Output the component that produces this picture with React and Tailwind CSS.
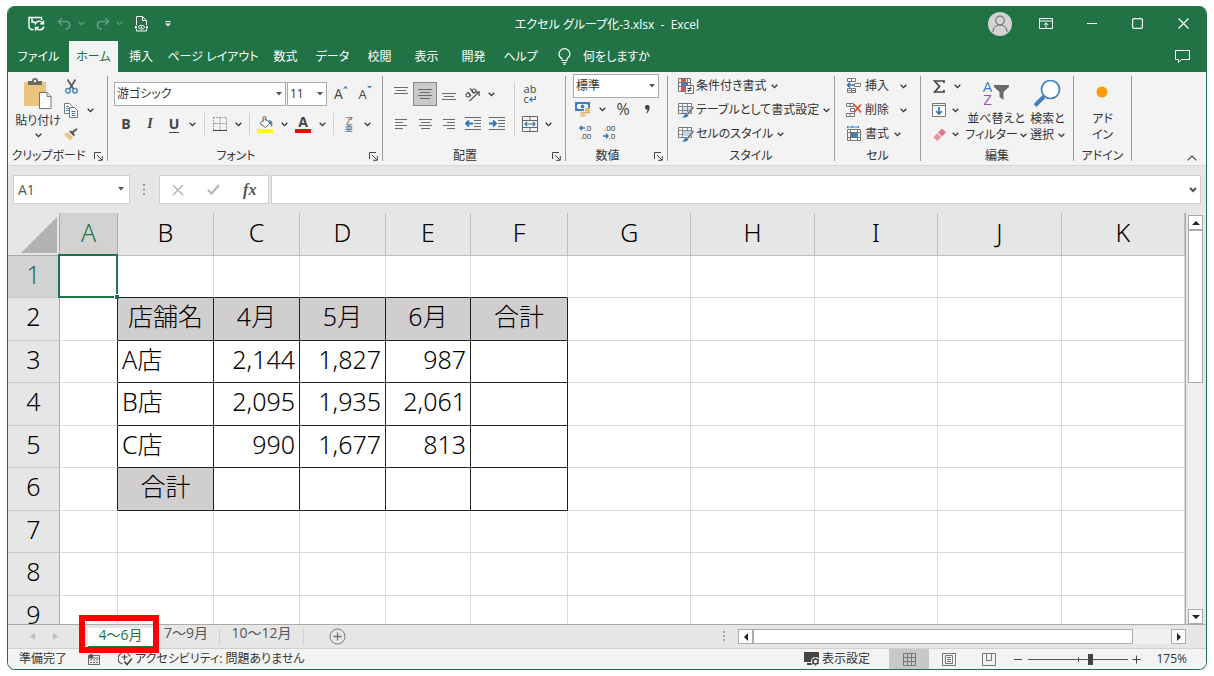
import React, { useState } from 'react'

const MENU_TABS = ['数式', 'データ', '校閲', '表示', '開発', 'ヘルプ']

const COLUMNS = [
  { id: 'A', width: 'w-[58px]' },
  { id: 'B', width: 'w-[96px]' },
  { id: 'C', width: 'w-[86px]' },
  { id: 'D', width: 'w-[86px]' },
  { id: 'E', width: 'w-[85px]' },
  { id: 'F', width: 'w-[97px]' },
  { id: 'G' },
  { id: 'H' },
  { id: 'I' },
  { id: 'J' },
  { id: 'K' },
]

// Keyed by row number, starting in column B
const DATA = {
  2: ['店舗名', '4月', '5月', '6月', '合計'],
  3: ['A店', '2,144', '1,827', '987', ''],
  4: ['B店', '2,095', '1,935', '2,061', ''],
  5: ['C店', '990', '1,677', '813', ''],
  6: ['合計', '', '', '', ''],
}

/* ---------- small shared pieces ---------- */

function Chevron({ className = 'w-3' }) {
  return (
    <button type="button" aria-label="その他" className={`flex h-5 shrink-0 items-center justify-center ${className}`}>
      <ChevronMark />
    </button>
  )
}

function ChevronMark({ color = '#333' }) {
  return (
    <svg width="7" height="5" viewBox="0 0 7 5" className="shrink-0" fill="none" stroke={color} strokeWidth="1.3">
      <path d="M0.7 0.8 3.5 3.6 6.3 0.8" />
    </svg>
  )
}

function Triangle({ className = '' }) {
  return (
    <svg width="6" height="4" viewBox="0 0 6 4" className={className}>
      <path d="M0 0h6L3 3.6z" fill="#555" />
    </svg>
  )
}

function IconButton({ label, className = 'w-6', children }) {
  return (
    <button type="button" aria-label={label} className={`flex h-6 shrink-0 items-center justify-center ${className}`}>
      {children}
    </button>
  )
}

function Picker({ label, value, className }) {
  return (
    <div className={`relative h-6 shrink-0 ${className}`}>
      <select
        aria-label={label}
        defaultValue={value}
        className="h-full w-full appearance-none border border-[#ababab] bg-white pl-0.5 text-xs text-[#333] [font-feature-settings:'palt']"
      >
        <option>{value}</option>
      </select>
      <Triangle className="pointer-events-none absolute top-2.5 right-1" />
    </div>
  )
}

function Divider({ className }) {
  return <div className={`w-px shrink-0 bg-[#d0d0d0] ${className}`} />
}

function Group({ title, launcher, className, children }) {
  return (
    <>
      <section className={`flex shrink-0 flex-col ${className}`}>
        <div className="h-[75px]">{children}</div>
        <div className={`relative flex h-[18px] items-center justify-center ${launcher ? 'pr-[18px]' : ''}`}>
          <h2>{title}</h2>
          {launcher && (
            <button type="button" aria-label={`${title}の設定`} className="absolute right-1 bottom-1">
              <svg width="9" height="9" viewBox="0 0 9 9" fill="none" stroke="#444">
                <path d="M0.500 7V0.500H7M3 3l5 5M8.300 4v4.300H4" />
              </svg>
            </button>
          )}
        </div>
      </section>
      <div className="mt-1 h-[85px] w-px shrink-0 bg-[#9b9b9b]" />
    </>
  )
}

function Lines({ rows, top = 0 }) {
  // rows: list of [x, width] pairs, one line each
  return (
    <svg width="14" height="16" viewBox="0 0 14 16" fill="#6b6b6b">
      {rows.map(([x, w], i) => (
        <rect key={i} x={x} y={top + i * 3} width={w} height="1" />
      ))}
    </svg>
  )
}

/* ---------- title bar and menu ---------- */

function TitleBar() {
  return (
    <header className="relative flex h-[35px] shrink-0 items-center justify-between text-white">
      <div className="flex items-center pl-5">
        <button type="button" aria-label="上書き保存">
          <svg width="17" height="16" viewBox="0 0 17 16" fill="none" stroke="#fff" strokeWidth="1.400">
            <path d="M5.500 13.500H3L1 11.500V1.500h12.500V4M4 1.500V6h3" />
            <path d="M7 8.500a4.300 4.300 0 0 1 8-1M15.500 4.500V7.800h-3.300M15.800 10.500a4.300 4.300 0 0 1-8 1M7.500 14.800v-3.300h3.300" />
          </svg>
        </button>
        <button type="button" aria-label="元に戻す" className="ml-3 flex items-center gap-1.5">
          <svg width="15" height="13" viewBox="0 0 15 13" fill="none" stroke="#5f9c7b" strokeWidth="1.700">
            <path d="M5 1 1.500 4.500 5 8M1.500 4.500H9.500a3.800 3.800 0 0 1 0 7.500H8" />
          </svg>
          <ChevronMark color="#5f9c7b" />
        </button>
        <button type="button" aria-label="やり直し" className="ml-2.5 flex items-center gap-1.5">
          <svg width="15" height="13" viewBox="0 0 15 13" fill="none" stroke="#5f9c7b" strokeWidth="1.700">
            <path d="M10 1l3.500 3.500L10 8M13.500 4.500H5.500a3.800 3.800 0 0 0 0 7.500H7" />
          </svg>
          <ChevronMark color="#5f9c7b" />
        </button>
        <button type="button" aria-label="印刷プレビュー" className="ml-3">
          <svg width="13" height="16" viewBox="0 0 13 16" fill="none" stroke="#fff">
            <path d="M1.500 9V0.500h6L11.500 4.500V9M7.500 0.500v4h4M1.500 13v2h10v-2" />
            <path d="M0 10h2v2.500H0zM11 10h2v2.500h-2z" fill="#fff" stroke="none" />
            <ellipse cx="6.500" cy="11.200" rx="3" ry="1.900" />
            <circle cx="6.500" cy="11.200" r="0.500" />
          </svg>
        </button>
        <button type="button" aria-label="クイック アクセス ツール バーのカスタマイズ" className="ml-[17px]">
          <svg width="6" height="6" viewBox="0 0 6 6" fill="#fff">
            <path d="M0.500 0h5v1h-5zM0 2.500h6L3 5.500z" />
          </svg>
        </button>
      </div>

      <h1 className="pointer-events-none absolute inset-x-0 pt-0.5 text-center text-xs whitespace-pre [font-feature-settings:'palt']">
        エクセル グループ化-3.xlsx  -  Excel
      </h1>

      <div className="flex items-center pr-[17px]">
        <button type="button" aria-label="アカウント" className="h-6 w-6 overflow-hidden rounded-full bg-[#d4d4d4]">
          <svg width="24" height="24" viewBox="0 0 24 24" fill="none" stroke="#777" strokeWidth="1.200">
            <circle cx="12" cy="8.500" r="4.300" />
            <path d="M5 20c0-4.300 3-7 7-7s7 2.700 7 7" />
          </svg>
        </button>
        <button type="button" aria-label="リボンの表示オプション" className="ml-[27px]">
          <svg width="14" height="11" viewBox="0 0 14 11" fill="none" stroke="#fff">
            <path d="M0.500 0.500h13v10H0.500zM0.500 3h13M7 10V5M4.800 7 7 4.800 9.200 7" />
          </svg>
        </button>
        <button type="button" aria-label="最小化" className="ml-[34px]">
          <svg width="10" height="10" viewBox="0 0 10 10" stroke="#fff">
            <path d="M0 4.500h10" />
          </svg>
        </button>
        <button type="button" aria-label="最大化" className="ml-[35px]">
          <svg width="11" height="11" viewBox="0 0 11 11" fill="none" stroke="#fff" strokeWidth="1.200">
            <rect x="0.600" y="0.600" width="9.800" height="9.800" rx="1.500" />
          </svg>
        </button>
        <button type="button" aria-label="閉じる" className="ml-[35px]">
          <svg width="11" height="11" viewBox="0 0 11 11" stroke="#fff" strokeWidth="1.200">
            <path d="M0.500 0.500l10 10M10.500 0.500l-10 10" />
          </svg>
        </button>
      </div>
    </header>
  )
}

function MenuBar() {
  return (
    <nav className="flex h-[31px] shrink-0 items-stretch text-xs whitespace-nowrap text-white [font-feature-settings:'palt']">
      <button type="button" className="w-[61px]">ファイル</button>
      <button type="button" className="w-[49px] bg-[#f3f3f3] text-[#217346]">ホーム</button>
      <button type="button" className="w-[46px]">挿入</button>
      <button type="button" className="w-[98px]">ページ レイアウト</button>
      {MENU_TABS.map((tab) => (
        <button type="button" key={tab} className="w-[47px]">{tab}</button>
      ))}
      <button type="button" className="ml-[14px] flex items-center gap-3">
        <svg width="13" height="17" viewBox="0 0 13 17" fill="none" stroke="#fff" strokeWidth="1.200">
          <path d="M4 12.500v-1.700C2.200 9.700 1 8.200 1 6.200a5.400 5.400 0 0 1 11 0c0 2-1.300 3.500-3 4.600v1.700zM4.500 14.500h4M5.200 16.200h2.600" />
        </svg>
        何をしますか
      </button>
      <button type="button" aria-label="コメント" className="mr-4 ml-auto">
        <svg width="15" height="13" viewBox="0 0 15 13" fill="none" stroke="#fff">
          <path d="M0.500 0.500h14v9H6.500l-3 3v-3h-3z" />
        </svg>
      </button>
    </nav>
  )
}

/* ---------- ribbon groups ---------- */

function ClipboardGroup() {
  return (
    <Group title="クリップボード" launcher className="w-[99px]">
      <div className="flex">
        <button type="button" className="flex w-[52px] flex-col items-center pt-1.5 pl-2">
          <svg width="28" height="31" viewBox="0 0 28 31">
            <path d="M0 4h22v24H0z" fill="#eac47d" />
            <path d="M4 7V3h4a3 3 0 0 1 6 0h4v4z" fill="#6a6a6a" />
            <circle cx="11" cy="3" r="1.200" fill="#f3f3f3" />
            <path d="M15.500 14.500h7.500l4 4v12H15.500z" fill="#fff" stroke="#777" />
            <path d="M23 14.500v4h4" fill="none" stroke="#777" />
          </svg>
          <span className="leading-6">貼り付け</span>
          <ChevronMark />
        </button>
        <div className="flex flex-col pt-0.5">
          <IconButton label="切り取り" className="w-[22px]">
            <svg width="13" height="15" viewBox="0 0 13 15" fill="none" strokeWidth="1.300">
              <path d="M2.500 0.500 8.500 10M10.500 0.500 4.500 10" stroke="#555" strokeWidth="1.600" />
              <circle cx="3" cy="11.700" r="2.300" stroke="#3f7fc0" />
              <circle cx="10" cy="11.700" r="2.300" stroke="#3f7fc0" />
            </svg>
          </IconButton>
          <div className="flex items-center">
            <IconButton label="コピー" className="w-[22px]">
              <svg width="15" height="15" viewBox="0 0 15 15" fill="#fff" stroke="#777">
                <path d="M0.500 0.500h5l3 3v7h-8z" />
                <path d="M5.500 4.500h5l3 3v7h-8z" />
                <path d="M2 3.500h3M2 5.500h3M2 7.500h3M7.500 8.500h4M7.500 10.500h4M7.500 12.500h4" stroke="#3f7fc0" />
              </svg>
            </IconButton>
            <Chevron className="w-4" />
          </div>
          <IconButton label="書式のコピー/貼り付け" className="w-[22px]">
            <svg width="14" height="13" viewBox="0 0 14 13">
              <path d="M0 6l4-1.500 5 5-3 3z" fill="#eac47d" />
              <path d="M5 3.500 10 8.500 11 6.500 9.500 5 13.500 1.500 12.500 0 8 3.500 6.500 2.500z" fill="#555" />
            </svg>
          </IconButton>
        </div>
      </div>
    </Group>
  )
}

function FontGroup() {
  return (
    <Group title="フォント" launcher className="w-[274px]">
      <div className="flex flex-col gap-1.5 pt-2.5 pl-1.5">
        <div className="flex items-center">
          <Picker label="フォント" value="游ゴシック" className="w-[172px]" />
          <Picker label="フォント サイズ" value="11" className="ml-px w-10" />
          <IconButton label="フォント サイズの拡大" className="ml-0.5 w-6">
            <span className="text-sm leading-4 text-[#444]">A</span>
            <svg width="5" height="16" viewBox="0 0 5 16"><path d="M0 2.500 2.500 0 5 2.500z" fill="#3f7fc0" /></svg>
          </IconButton>
          <IconButton label="フォント サイズの縮小">
            <span className="text-[13px] leading-4 text-[#444]">A</span>
            <svg width="5" height="16" viewBox="0 0 5 16"><path d="M0 0h5L2.500 2.500z" fill="#3f7fc0" /></svg>
          </IconButton>
        </div>
        <div className="flex items-center text-sm text-[#444]">
          <IconButton label="太字"><b>B</b></IconButton>
          <IconButton label="斜体"><i className="font-['Liberation_Serif'] font-bold">I</i></IconButton>
          <IconButton label="下線"><b className="border-b border-[#444] leading-4">U</b></IconButton>
          <Chevron />
          <Divider className="mx-1.5 h-[22px]" />
          <IconButton label="罫線" className="w-[18px]">
            <svg width="14" height="14" viewBox="0 0 14 14" fill="none" stroke="#888">
              <path d="M0.500 0.500h13v13M0.500 0.500v13M7 1v12M1 6.500h12" strokeDasharray="1.500 1.200" />
              <path d="M0 13.500h14" stroke="#444" />
            </svg>
          </IconButton>
          <Chevron className="w-[18px]" />
          <Divider className="mx-0.5 h-[22px]" />
          <IconButton label="塗りつぶしの色" className="w-[26px]">
            <svg width="16" height="17" viewBox="0 0 16 17" fill="none">
              <path d="M3 7.500 8 2.500l5 4.500-4.500 4.500z" fill="#fff" stroke="#666" />
              <path d="M6 6V2a1.500 1.500 0 0 1 3 0V5" stroke="#666" />
              <path d="M11.500 4c4 0 4.500 3.500 3.500 7-1.500-1-1-3-2-4z" fill="#3f7fc0" />
              <path d="M0 13h16v4H0z" fill="#ffff00" />
            </svg>
          </IconButton>
          <Chevron />
          <IconButton label="フォントの色" className="w-[26px]">
            <span className="flex w-4 justify-center border-b-4 border-[#ff0000] text-sm leading-[14px] font-bold">A</span>
          </IconButton>
          <Chevron />
          <Divider className="mx-[5px] h-[22px]" />
          <IconButton label="ふりがなの表示" className="w-5">
            <span className="flex flex-col items-center text-[8px] leading-2">
              <span>ア</span>
              <span>亜</span>
            </span>
          </IconButton>
          <Chevron className="w-4" />
        </div>
      </div>
    </Group>
  )
}

function IndentIcon({ outdent }) {
  return (
    <svg width="16" height="14" viewBox="0 0 16 14" fill="none" stroke="#6b6b6b">
      <path d="M0 0.500h16M9 3.500h7M9 6.500h7M9 9.500h7M0 12.500h16" />
      <path d={outdent ? 'M8 6.500H1M4 3.500 1 6.500l3 3' : 'M0 6.500h7M4 3.500l3 3-3 3'} stroke="#2f74b8" strokeWidth="1.800" />
    </svg>
  )
}

function AlignmentGroup() {
  return (
    <Group title="配置" launcher className="w-[182px]">
      <div className="flex pt-2.5 pl-1.5">
        <div className="flex flex-col gap-1.5">
          <div className="flex items-center">
            <IconButton label="上揃え"><Lines top={1} rows={[[0, 14], [2, 10], [0, 14]]} /></IconButton>
            <button type="button" aria-label="上下中央揃え" aria-pressed="true" className="flex h-6 w-6 items-center justify-center border border-[#8a8a8a] bg-[#c9c9c9]">
              <Lines top={3} rows={[[0, 14], [2, 10], [0, 14], [2, 10]]} />
            </button>
            <IconButton label="下揃え"><Lines top={7} rows={[[0, 14], [2, 10], [0, 14]]} /></IconButton>
            <IconButton label="方向">
              <svg width="16" height="15" viewBox="0 0 16 15" fill="none" stroke="#555" strokeWidth="1.200">
                <path d="M4.500 14 14 5M14.200 9V4.800H10" />
                <ellipse cx="3" cy="8" rx="2" ry="2" />
                <path d="M2.500 5 6 9M5 1.500l4.500 5" />
                <ellipse cx="9" cy="4" rx="2" ry="2" />
              </svg>
            </IconButton>
            <Chevron />
          </div>
          <div className="flex items-center">
            <IconButton label="左揃え"><Lines top={3} rows={[[1, 12], [1, 8], [1, 12], [1, 8]]} /></IconButton>
            <IconButton label="中央揃え"><Lines top={3} rows={[[1, 13], [3, 9], [1, 13], [3, 9]]} /></IconButton>
            <IconButton label="右揃え"><Lines top={3} rows={[[1, 12], [5, 8], [1, 12], [5, 8]]} /></IconButton>
            <IconButton label="インデントを減らす"><IndentIcon outdent /></IconButton>
            <IconButton label="インデントを増やす"><IndentIcon /></IconButton>
          </div>
        </div>
        <Divider className="mx-[5px] h-[54px]" />
        <div className="flex flex-col gap-1.5">
          <IconButton label="折り返して全体を表示する" className="w-5">
            <span className="flex flex-col text-[11px] leading-[10px] text-[#444]">
              <span>ab</span>
              <span className="flex items-center">
                c
                <svg width="7" height="6" viewBox="0 0 7 6" fill="none" stroke="#2f74b8" strokeWidth="1.200">
                  <path d="M6.300 0v3.500H1M3.200 1.200 1 3.500l2.200 2.200" />
                </svg>
              </span>
            </span>
          </IconButton>
          <div className="flex items-center">
            <IconButton label="セルを結合して中央揃え" className="w-5">
              <svg width="16" height="16" viewBox="0 0 16 16" fill="none" stroke="#666">
                <path d="M0.500 0.500h15v15H0.500zM0.500 4.500h15M0.500 11.500h15M8 0.500v4M8 11.500v4" />
                <path d="M3 8h10M5 6 3 8l2 2M11 6l2 2-2 2" stroke="#2f74b8" strokeWidth="1.200" />
              </svg>
            </IconButton>
            <Chevron className="w-4" />
          </div>
        </div>
      </div>
    </Group>
  )
}

function DecimalIcon({ top, bottom, increase }) {
  const arrow = (
    <svg width="6" height="6" viewBox="0 0 6 6" fill="none" stroke="#2f74b8" strokeWidth="1.400">
      <path d={increase ? 'M6 3H1M3 0.800 0.900 3 3 5.200' : 'M0 3h5M3 0.800 5.100 3 3 5.200'} />
    </svg>
  )
  return (
    <span className="flex flex-col items-end text-[8px] leading-2 text-[#333]">
      <span className="flex items-center">{increase && arrow}{top}</span>
      <span className="flex items-center">{!increase && arrow}{bottom}</span>
    </span>
  )
}

function NumberGroup() {
  return (
    <Group title="数値" launcher className="w-[101px]">
      <div className="flex flex-col pt-0.5 pl-[7px]">
        <Picker label="表示形式" value="標準" className="w-[86px]" />
        <div className="flex h-[22px] items-center text-[#444]">
          <IconButton label="通貨表示形式" className="w-5">
            <svg width="16" height="15" viewBox="0 0 16 15">
              <path d="M0 0h15v9H0z" fill="#3f7fc0" />
              <path d="M2 3l1.500-1h8L13 3v3l-1.500 1h-8L2 6z" fill="#fff" />
              <circle cx="7.500" cy="4.500" r="1.900" fill="#3f7fc0" />
              <path d="M9 6h7v8H5v-4h4z" fill="#f3f3f3" />
              <path d="M10 6.500h5M10 8.500h5M5.500 11h5M10 10.500h5M5.500 13.500h5" stroke="#e0a95a" strokeWidth="1.300" />
            </svg>
          </IconButton>
          <Chevron className="w-[18px]" />
          <IconButton label="パーセント スタイル"><span className="text-base">%</span></IconButton>
          <IconButton label="桁区切りスタイル">
            <svg width="5" height="9" viewBox="0 0 5 9" fill="#444"><path d="M0 2.200a2.200 2.200 0 0 1 4.600 0C4.600 5 3.500 7.500.8 8.800 2 7.300 2.400 6 2.300 4.600 1 4.600 0 3.600 0 2.200z" /></svg>
          </IconButton>
        </div>
        <div className="flex h-6 items-center">
          <IconButton label="小数点以下の表示桁数を増やす"><DecimalIcon increase top=".0" bottom=".00" /></IconButton>
          <IconButton label="小数点以下の表示桁数を減らす"><DecimalIcon top=".00" bottom=".0" /></IconButton>
        </div>
      </div>
    </Group>
  )
}

function GridBase({ children }) {
  return (
    <svg width="16" height="16" viewBox="0 0 16 16" fill="none">
      <path d="M0.500 1.500h13v10H0.500z" fill="#fff" stroke="#777" />
      {children}
    </svg>
  )
}

function StylesGroup() {
  const brush = (
    <>
      <path d="M15.500 3.500 9 11l1.500 1.500L16 6z" fill="#666" stroke="#f3f3f3" strokeWidth="0.600" />
      <path d="M4 15.500c2 0 2-4 4.500-4.500l2 2c-.5 2.500-3.500 3-6.500 2.500z" fill="#3f7fc0" />
    </>
  )
  const items = [
    {
      text: '条件付き書式',
      icon: (
        <svg width="16" height="16" viewBox="0 0 16 16" fill="none" stroke="#777">
          <path d="M0.500 0.500h12v13H0.500zM0.500 4.500h12M0.500 8.500h12M3.500 0.500v13M9.500 0.500v7" />
          <path d="M4 1h4v3H4zM4 9h3v4H4z" fill="#d9533c" stroke="none" />
          <path d="M4 5h6v3H4z" fill="#3f7fc0" stroke="none" />
          <path d="M7.500 7.500h8v8h-8z" fill="#fff" />
          <path d="M9.500 10.500h4M9.500 12.500h4M13 9l-3 5" stroke="#444" />
        </svg>
      ),
    },
    {
      text: 'テーブルとして書式設定',
      icon: <GridBase><path d="M1 4.500h12M1 8.500h12M4.500 2v9M9.500 2v9" stroke="#888" /><path d="M5 5h8v6H5z" fill="#3f7fc0" opacity=".25" />{brush}</GridBase>,
    },
    {
      text: 'セルのスタイル',
      icon: <GridBase><path d="M1 4.500h12M1 8.500h3M4.500 2v9M9.500 2v2" stroke="#888" /><path d="M5 5h8v5H5z" fill="#bcd3ec" />{brush}</GridBase>,
    },
  ]
  return (
    <Group title="スタイル" className="w-[166px]">
      <div className="flex flex-col items-start pt-0.5 pl-2.5">
        {items.map((item) => (
          <button type="button" key={item.text} className="flex h-6 items-center">
            {item.icon}
            <span className="ml-0.5">{item.text}</span>
            <span className="ml-1"><ChevronMark /></span>
          </button>
        ))}
      </div>
    </Group>
  )
}

function CellsGroup() {
  return (
    <Group title="セル" className="w-[85px]">
      <div className="flex flex-col items-start pt-0.5 pl-[11px]">
        <button type="button" className="flex h-6 items-center">
          <svg width="16" height="16" viewBox="0 0 16 16" fill="#fff" stroke="#777">
            <path d="M1.500 0.500h8v3h-8zM5.500 0.500v3M8.500 5.500h6v3h-6zM1.500 10.500h8v4h-8zM5.500 10.500v4M1.500 12.500h8" />
            <path d="M8 7H1.500M4 4.500 1.500 7 4 9.500" fill="none" stroke="#2f74b8" strokeWidth="1.500" />
          </svg>
          <span className="ml-[3px]">挿入</span>
          <span className="ml-[11px]"><ChevronMark /></span>
        </button>
        <button type="button" className="flex h-6 items-center">
          <svg width="16" height="16" viewBox="0 0 16 16" fill="#fff" stroke="#777">
            <path d="M0.500 1.500h7v3h-7zM4 1.500v3M4.500 6.500h4v3h-4zM0.500 11.500h8v3h-8zM4 11.500v3" />
            <path d="M8 2.500l7 8M15 2.500l-7 8" stroke="#d9533c" strokeWidth="1.800" />
          </svg>
          <span className="ml-[3px]">削除</span>
          <span className="ml-[11px]"><ChevronMark /></span>
        </button>
        <button type="button" className="flex h-6 items-center">
          <svg width="16" height="16" viewBox="0 0 16 16" fill="#fff" stroke="#777">
            <path d="M1.500 3.500h13v11h-13zM1.500 6.500h13M1.500 11.500h13M4.500 3.500v11M11.500 3.500v11" />
            <path d="M5 7h6v4H5z" fill="#3f7fc0" stroke="none" />
            <path d="M1 1h12M1.500 0v2M6.500 0v2M12.500 0v2" stroke="#3f7fc0" />
          </svg>
          <span className="ml-[3px]">書式</span>
          <span className="ml-[5px]"><ChevronMark /></span>
        </button>
      </div>
    </Group>
  )
}

function EditingGroup() {
  return (
    <Group title="編集" className="w-[152px]">
      <div className="flex">
        <div className="flex w-[45px] flex-col pt-0.5 pl-1.5">
          <div className="flex items-center">
            <IconButton label="オート SUM">
              <svg width="12" height="13" viewBox="0 0 12 13" fill="none" stroke="#444" strokeWidth="1.700">
                <path d="M11 3V1H1.500L6.500 6.500 1.500 12H11v-2" />
              </svg>
            </IconButton>
            <Chevron />
          </div>
          <div className="flex items-center">
            <IconButton label="フィル">
              <svg width="14" height="14" viewBox="0 0 14 14" fill="#fff" stroke="#777">
                <path d="M0.500 0.500h13v13H0.500zM0.500 2.500h13" />
                <path d="M7 4v7M4 8l3 3 3-3" fill="none" stroke="#2f74b8" strokeWidth="1.700" />
              </svg>
            </IconButton>
            <Chevron className="w-2" />
          </div>
          <div className="flex items-center">
            <IconButton label="クリア">
              <svg width="13" height="13" viewBox="0 0 13 13">
                <path d="M5 4.500 9 0.500l4 4-4 4z" fill="#e0788a" />
                <path d="M4.300 5.200 8.300 9.200 5 12.500H3.500L0.500 9.500V9z" fill="#e893a2" />
              </svg>
            </IconButton>
            <Chevron className="w-2" />
          </div>
        </div>
        <button type="button" className="flex w-[60px] flex-col items-center pt-2">
          <span className="flex h-[31px] items-start gap-0.5">
            <span className="flex flex-col text-[15px] leading-[13px]">
              <span className="text-[#3f7fc0]">A</span>
              <span className="text-[#9a55b8]">Z</span>
            </span>
            <svg width="15" height="22" viewBox="0 0 15 22" fill="#6a6a6a">
              <path d="M0 5h15v2L9.500 12v8l-4-3v-5L0 7z" />
            </svg>
          </span>
          <span className="leading-4">並べ替えと</span>
          <span className="flex items-center gap-0.5 leading-4">フィルター <ChevronMark /></span>
        </button>
        <button type="button" className="flex w-[43px] flex-col items-center pt-2">
          <svg width="28" height="31" viewBox="0 0 28 31" fill="none" stroke="#3f7fc0">
            <circle cx="16.500" cy="9.500" r="9" fill="#fff" strokeWidth="1.700" />
            <path d="M10 16.500 1 25.500" strokeWidth="4" />
          </svg>
          <span className="leading-4">検索と</span>
          <span className="flex items-center gap-1 leading-4">選択 <ChevronMark /></span>
        </button>
      </div>
    </Group>
  )
}

function Ribbon() {
  return (
    <div className="flex h-[93px] shrink-0 overflow-hidden bg-[#f3f3f3] text-xs whitespace-nowrap text-[#333] [font-feature-settings:'palt']">
      <ClipboardGroup />
      <FontGroup />
      <AlignmentGroup />
      <NumberGroup />
      <StylesGroup />
      <CellsGroup />
      <EditingGroup />
      <Group title="アドイン" className="w-[57px]">
        <button type="button" className="flex w-full flex-col items-center pt-2">
          <svg width="28" height="31" viewBox="0 0 28 31">
            <circle cx="13" cy="12" r="5.500" fill="#ff9a0a" />
          </svg>
          <span className="leading-4">アド</span>
          <span className="leading-4">イン</span>
        </button>
      </Group>
      <button type="button" aria-label="リボンを折りたたむ" className="mr-[9px] mb-1 ml-auto self-end">
        <svg width="10" height="6" viewBox="0 0 10 6" fill="none" stroke="#444" strokeWidth="1.200">
          <path d="M0.700 5.300 5 1l4.300 4.300" />
        </svg>
      </button>
    </div>
  )
}

/* ---------- formula bar ---------- */

function FormulaBar() {
  return (
    <div className="flex h-12 shrink-0 items-start border-t border-[#d8d8d8] pt-[9px] pr-[5px] pl-[5px]">
      <div className="relative h-[29px] w-[117px]">
        <input aria-label="名前ボックス" defaultValue="A1" className="h-full w-full border border-[#cfcfcf] bg-white pl-1 text-sm text-[#555]" />
        <Triangle className="pointer-events-none absolute top-3 right-1.5" />
      </div>
      <div className="flex h-[29px] w-[29px] items-center justify-center">
        <svg width="3" height="12" viewBox="0 0 3 12" fill="#999">
          <path d="M0 0h2v2H0zM0 4.500h2v2H0zM0 9h2v2H0z" />
        </svg>
      </div>
      <div className="flex h-[29px] w-[110px] items-center justify-around border border-[#cfcfcf] bg-white">
        <button type="button" aria-label="キャンセル">
          <svg width="12" height="12" viewBox="0 0 12 12" stroke="#b5b5b5" strokeWidth="1.500"><path d="M1 1l10 10M11 1 1 11" /></svg>
        </button>
        <button type="button" aria-label="入力">
          <svg width="13" height="11" viewBox="0 0 13 11" fill="none" stroke="#b5b5b5" strokeWidth="2.200"><path d="M1 6l3.500 3.500L12 1" /></svg>
        </button>
        <button type="button" aria-label="関数の挿入" className="font-['Liberation_Serif'] text-base font-bold text-[#555] italic">fx</button>
      </div>
      <div className="relative ml-0.5 h-[29px] flex-1">
        <input aria-label="数式バー" className="h-full w-full border border-[#cfcfcf] bg-white px-2 text-sm" />
        <svg width="8" height="6" viewBox="0 0 8 6" className="absolute top-3 right-1" fill="none" stroke="#555" strokeWidth="2">
          <path d="M1 1l3 3 3-3" />
        </svg>
      </div>
    </div>
  )
}

/* ---------- sheet ---------- */

function cellClass(row, col) {
  const inTable = row >= 2 && row <= 6 && col >= 1 && col <= 5
  const right = inTable || (row >= 2 && row <= 6 && col === 0)
  const bottom = inTable || (row === 1 && col >= 1 && col <= 5)
  const centered = row === 2 || (row === 6 && col === 1)
  const align = centered ? 'text-center' : col === 1 ? 'pl-1 text-left' : 'pr-1 text-right'
  return [
    'border-r border-b pt-0 pb-1.5',
    right ? 'border-r-[#222]' : 'border-r-[#d9d9d9]',
    bottom ? 'border-b-[#222]' : 'border-b-[#d9d9d9]',
    inTable && centered ? 'bg-[#d0cece]' : 'bg-white',
    align,
  ].join(' ')
}

function Sheet() {
  return (
    <div className="min-h-0 min-w-0 flex-1 overflow-hidden">
      <table className="w-full table-fixed border-separate border-spacing-0 border-r border-[#ababab] text-[25px] leading-8 font-light text-black">
        <thead>
          <tr className="h-[43px]">
            <th className="w-[52px] border-r border-b border-[#ababab] p-0 align-bottom">
              <svg width="36" height="36" viewBox="0 0 36 36" className="mb-0.5 ml-[13px]">
                <path d="M36 0v36H0z" fill="#b2b2b2" />
              </svg>
            </th>
            {COLUMNS.map((c) => (
              <th
                key={c.id}
                scope="col"
                className={`border-r border-b pb-1 font-light ${c.width ?? ''} ${
                  c.id === 'A' ? 'border-r-[#ababab] border-b-[#217346] bg-[#d2d2d2] text-[#217346]' : 'border-[#bdbdbd]'
                }`}
              >
                {c.id}
              </th>
            ))}
          </tr>
        </thead>
        <tbody>
          {[1, 2, 3, 4, 5, 6, 7, 8, 9].map((row) => (
            <tr key={row} className="h-[42px] even:h-[43px]">
              <th
                scope="row"
                className={`border-r border-b border-r-[#ababab] border-b-[#c8c8c8] pb-1.5 font-light ${
                  row === 1 ? 'bg-[#d2d2d2] text-[#217346]' : ''
                }`}
              >
                {row}
              </th>
              {COLUMNS.map((c, col) => (
                <td key={c.id} className={`${cellClass(row, col)} ${row === 1 && col === 0 ? 'relative' : ''}`}>
                  {DATA[row]?.[col - 1]}
                  {row === 1 && col === 0 && (
                    <div className="absolute -inset-0.5 -right-px -bottom-px border-2 border-[#217346]">
                      <span className="absolute -right-[3px] -bottom-[3px] h-[5px] w-[5px] border-t border-l border-white bg-[#217346]" />
                    </div>
                  )}
                </td>
              ))}
            </tr>
          ))}
        </tbody>
      </table>
    </div>
  )
}

const ARROWS = {
  up: 'M0 6 4 2l4 4z',
  down: 'M0 2h8L4 6z',
  left: 'M6 0v8L2 4z',
  right: 'M2 0v8l4-4z',
}

function ScrollButton({ direction, label }) {
  return (
    <button type="button" aria-label={label} className="flex h-[15px] w-[15px] shrink-0 items-center justify-center border border-[#ababab] bg-white">
      <svg width="8" height="8" viewBox="0 0 8 8"><path d={ARROWS[direction]} fill="#222" /></svg>
    </button>
  )
}

function VerticalScroll() {
  return (
    <div className="mt-0.5 mr-[3px] ml-0.5 flex flex-col bg-[#f0f0f0]">
      <ScrollButton direction="up" label="上へスクロール" />
      <div className="h-[153px] w-[15px] border border-[#ababab] bg-white" />
      <div className="mt-auto"><ScrollButton direction="down" label="下へスクロール" /></div>
    </div>
  )
}

/* ---------- bottom bars ---------- */

function SheetTabs() {
  return (
    <div className="flex h-6 shrink-0 border-t border-[#ababab] text-sm whitespace-nowrap text-[#555]">
      <div className="flex w-20 items-center gap-[18px] pl-[22px]">
        <button type="button" aria-label="前のシート">
          <svg width="5" height="7" viewBox="0 0 5 7"><path d="M5 0v7L0 3.500z" fill="#bbb" /></svg>
        </button>
        <button type="button" aria-label="次のシート">
          <svg width="5" height="7" viewBox="0 0 5 7"><path d="M0 0v7l5-3.500z" fill="#bbb" /></svg>
        </button>
      </div>
      <div className="relative h-5 w-[65px]">
        <button type="button" className="h-full w-full border-b-2 border-[#217346] bg-white pb-1 leading-[14px] text-[#217346]">4～6月</button>
        <div className="pointer-events-none absolute -top-2.5 -right-1.5 -bottom-2 -left-[9px] z-10 border-6 border-[#ff0000]" />
      </div>
      <button type="button" className="h-5 w-[66px] pb-1 leading-4">7～9月</button>
      <Divider className="mt-1 h-4 bg-[#ababab]" />
      <button type="button" className="h-5 w-[83px] pb-1 leading-4">10～12月</button>
      <Divider className="mt-1 h-4 bg-[#ababab]" />
      <button type="button" aria-label="新しいシート" className="ml-[25px]">
        <svg width="17" height="17" viewBox="0 0 17 17" fill="none" stroke="#777">
          <circle cx="8.500" cy="8.500" r="7.500" />
          <path d="M8.500 4.500v8M4.500 8.500h8" strokeWidth="1.300" />
        </svg>
      </button>
      <div className="ml-auto flex items-center">
        <svg width="3" height="11" viewBox="0 0 3 11" fill="#aaa">
          <path d="M0 0h2v2H0zM0 4h2v2H0zM0 8h2v2H0z" />
        </svg>
        <div className="ml-3 flex w-[448px] bg-[#f0f0f0]">
          <ScrollButton direction="left" label="左へスクロール" />
          <div className="h-[15px] w-[380px] border border-[#ababab] bg-white" />
          <div className="ml-auto"><ScrollButton direction="right" label="右へスクロール" /></div>
        </div>
        <div className="w-5" />
      </div>
    </div>
  )
}

function StatusBar() {
  const [zoom, setZoom] = useState(63)
  return (
    <footer className="flex h-[21px] shrink-0 items-center border-t border-[#d0d0d0] bg-[#f3f3f3] pr-[19px] pl-[11px] text-xs whitespace-nowrap text-[#333] [font-feature-settings:'palt']">
      <span>準備完了</span>
      <button type="button" aria-label="マクロの記録" className="ml-[21px]">
        <svg width="12" height="11" viewBox="0 0 12 11" fill="none" stroke="#666">
          <path d="M0.500 1.500h11v9H0.500zM0.500 4h11M2 6h2M5 6h2M8 6h2M2 8.500h2M5 8.500h2M8 8.500h2" />
          <circle cx="3" cy="2.200" r="2.200" fill="#555" stroke="none" />
        </svg>
      </button>
      <button type="button" className="ml-[18px] flex items-center gap-0.5">
        <svg width="15" height="14" viewBox="0 0 15 14" fill="none" stroke="#444" strokeWidth="1.200">
          <path d="M3.500 1.500a5.500 5.500 0 0 0 1 10.500M9.500 1.500a5 5 0 0 1 2.500 3" />
          <path d="M3.500 5h6M6.500 2.500V8" />
          <path d="M6.500 9.500l2.500 3 5-6" strokeWidth="1.600" />
        </svg>
        アクセシビリティ: 問題ありません
      </button>

      <button type="button" className="ml-auto flex items-center gap-0.5">
        <svg width="16" height="14" viewBox="0 0 16 14">
          <path d="M0 0h15v10H0zM3 11h5v2H3z" fill="#444" />
          <circle cx="11.500" cy="9.500" r="4.500" fill="#f3f3f3" />
          <circle cx="11.500" cy="9.500" r="2.500" fill="none" stroke="#444" strokeWidth="1.500" />
          <path d="M11.500 5.500v8M8 7.500l7 4M8 11.500l7-4" stroke="#444" strokeDasharray="1.500 5 1.500" />
        </svg>
        表示設定
      </button>
      <div className="ml-[19px] flex h-full">
        <button type="button" aria-label="標準" aria-pressed="true" className="flex w-10 items-center justify-center bg-[#c8c8c8]">
          <svg width="13" height="13" viewBox="0 0 13 13" fill="none" stroke="#777"><path d="M0.500 0.500h12v12H0.500zM4.500 0v13M8.500 0v13M0 4.500h13M0 8.500h13" /></svg>
        </button>
        <button type="button" aria-label="ページ レイアウト" className="flex w-10 items-center justify-center">
          <svg width="14" height="13" viewBox="0 0 14 13" fill="none" stroke="#777"><path d="M0.500 0.500h13v12H0.500zM3.500 2.500h7v8h-7zM5 4.500h4M5 6.500h4M5 8.500h4" /></svg>
        </button>
        <button type="button" aria-label="改ページ プレビュー" className="flex w-10 items-center justify-center">
          <svg width="14" height="13" viewBox="0 0 14 13" fill="none" stroke="#777"><path d="M0.500 0.500h13v12H0.500zM4.500 0.500v7M9.500 0.500v7M4.500 7.500h5" /></svg>
        </button>
      </div>
      <button type="button" aria-label="縮小" className="ml-[5px]">
        <svg width="8" height="9" viewBox="0 0 8 9" stroke="#444"><path d="M0 4.500h8" /></svg>
      </button>
      <div className="relative ml-1.5 flex h-4 w-[100px] items-center">
        <div className="absolute inset-x-0 h-px bg-[#555]" />
        <div className="absolute left-1/2 h-[5px] w-px bg-[#555]" />
        <input
          type="range"
          aria-label="ズーム"
          value={zoom}
          onChange={(e) => setZoom(Number(e.target.value))}
          className="relative h-4 w-full appearance-none bg-transparent [&::-webkit-slider-thumb]:h-[11px] [&::-webkit-slider-thumb]:w-[5px] [&::-webkit-slider-thumb]:appearance-none [&::-webkit-slider-thumb]:bg-[#444]"
        />
      </div>
      <button type="button" aria-label="拡大" className="ml-1">
        <svg width="9" height="9" viewBox="0 0 9 9" stroke="#444"><path d="M0.500 4.500h8M4.500 0.500v8" /></svg>
      </button>
      <span className="ml-3 w-[34px] text-right">175%</span>
    </footer>
  )
}

export default function App() {
  return (
    <div className="h-screen bg-white px-[7px] py-1.5 font-['Open_Sans','Noto_Sans_CJK_JP',sans-serif]">
      <div className="flex h-full flex-col overflow-hidden rounded-lg border-x border-b border-[#217346] bg-[#e6e6e6]">
        <div className="shrink-0 bg-[#217346]">
          <TitleBar />
          <MenuBar />
        </div>
        <Ribbon />
        <FormulaBar />
        <div className="flex min-h-0 flex-1 font-['Noto_Sans','Noto_Sans_CJK_JP',sans-serif]">
          <Sheet />
          <VerticalScroll />
        </div>
        <SheetTabs />
        <StatusBar />
      </div>
    </div>
  )
}
